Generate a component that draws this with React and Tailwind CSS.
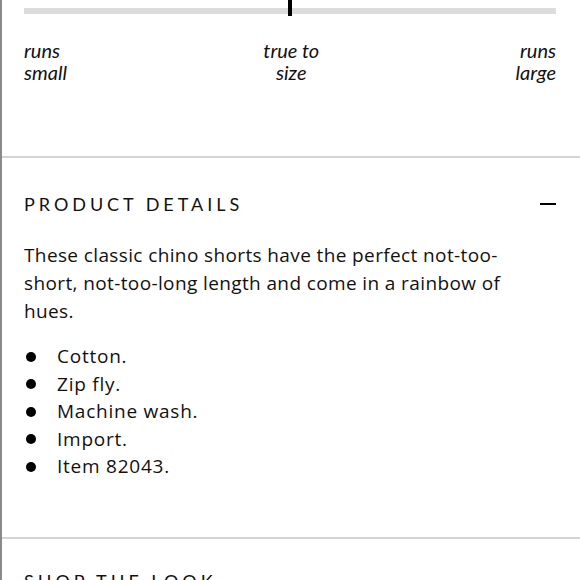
import React from 'react';

const bullets = ['Cotton.', 'Zip fly.', 'Machine wash.', 'Import.', 'Item 82043.'];

function FitScale() {
    return (
        <div className="px-6 pt-2 pb-[73px]">
            {/* Track with marker */}
            <div className="relative h-[6px] bg-[#dcdcdc]">
                <div className="absolute left-1/2 -top-4 w-1 h-[24px] -translate-x-1/2 bg-black" />
            </div>

            {/* Labels */}
            <div className="mt-[25px] flex justify-between italic text-[20px] leading-[22px] text-[#111]">
                <p>runs<br />small</p>
                <p className="text-center">true to<br />size</p>
                <p className="text-right">runs<br />large</p>
            </div>
        </div>
    );
}

function ProductDetails() {
    return (
        <div className="px-6 pt-[34px] pb-[56px]">
            {/* Heading */}
            <div className="flex items-center justify-between">
                <h2 className="text-[18px] leading-6 tracking-[0.22em] text-[#111]">PRODUCT DETAILS</h2>
                <span className="block w-4 h-[2px] bg-black" />
            </div>

            {/* Description */}
            <p className="mt-[25px] max-w-[522px] font-['Open_Sans',sans-serif] text-[19px] leading-[28px] tracking-[0.02em] text-[#111]">
                These classic chino shorts have the perfect not-too-short, not-too-long length and come in a rainbow of hues.
            </p>

            {/* Bullets */}
            <ul className="mt-[18px] font-['Open_Sans',sans-serif] text-[19px] leading-[27.5px] tracking-[0.04em] text-[#111]">
                {bullets.map((item) => (
                    <li key={item} className="flex items-center">
                        <span className="ml-[2px] w-[10px] h-[10px] rounded-full bg-black" />
                        <span className="ml-[21px]">{item}</span>
                    </li>
                ))}
            </ul>
        </div>
    );
}

export default function App() {
    return (
        <div className="w-[580px] h-[580px] overflow-hidden bg-white border-l-2 border-[#8a8a8a] font-['Lato',sans-serif]">
            <div className="-ml-[2px]">
                <FitScale />
                <div className="h-[2px] bg-[#d4d4d4]" />
                <ProductDetails />
                <div className="h-[2px] bg-[#d4d4d4]" />
                <div className="px-6 pt-[30px]">
                    <h2 className="text-[18px] leading-6 tracking-[0.22em] text-[#111]">SHOP THE LOOK</h2>
                </div>
            </div>
        </div>
    );
}
